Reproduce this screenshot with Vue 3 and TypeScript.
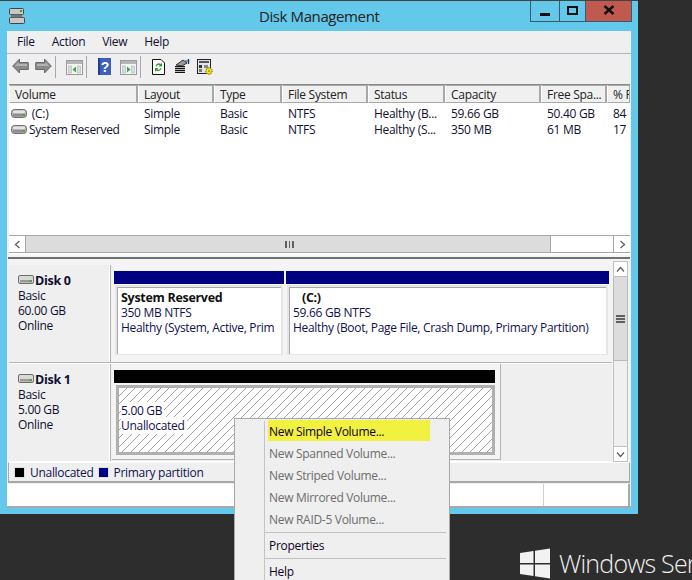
<script setup lang="ts">
interface Row { name: string; layout: string; type: string; fs: string; status: string; cap: string; free: string; pct: string }
const columns: { label: string; width: number }[] = [
  { label: 'Volume', width: 129 },
  { label: 'Layout', width: 76 },
  { label: 'Type', width: 68 },
  { label: 'File System', width: 86 },
  { label: 'Status', width: 77 },
  { label: 'Capacity', width: 96 },
  { label: 'Free Spa...', width: 66 },
  { label: '% F', width: 24 },
]
const rows: Row[] = [
  { name: ' (C:)', layout: 'Simple', type: 'Basic', fs: 'NTFS', status: 'Healthy (B...', cap: '59.66 GB', free: '50.40 GB', pct: '84' },
  { name: 'System Reserved', layout: 'Simple', type: 'Basic', fs: 'NTFS', status: 'Healthy (S...', cap: '350 MB', free: '61 MB', pct: '17' },
]
const menu: { label: string; state: string }[] = [
  { label: 'New Simple Volume...', state: 'hot' },
  { label: 'New Spanned Volume...', state: 'off' },
  { label: 'New Striped Volume...', state: 'off' },
  { label: 'New Mirrored Volume...', state: 'off' },
  { label: 'New RAID-5 Volume...', state: 'off' },
]
</script>

<template>
  <div class="desk">
    <div class="window">
      <div class="titlebar">
        <svg class="appicon" width="18" height="18" viewBox="0 0 18 18">
          <rect x="1.5" y="1.5" width="14" height="6" rx="1" fill="#c8c8c8" stroke="#444"/>
          <rect x="1.5" y="10.5" width="15" height="6" rx="1" fill="#c8c8c8" stroke="#444"/>
          <rect x="3" y="7.5" width="11" height="3" fill="#777"/>
          <rect x="12" y="3" width="2" height="2" fill="#3c9a3c"/>
        </svg>
        <span class="title">Disk Management</span>
        <div class="winbtns">
          <div class="wb min"><span></span></div>
          <div class="wb max"><span></span></div>
          <div class="wb close">
            <svg width="12" height="10" viewBox="0 0 12 10"><path d="M1.5 1 L10.5 9 M10.5 1 L1.5 9" stroke="#111" stroke-width="2.4" fill="none"/></svg>
          </div>
        </div>
      </div>
      <div class="client">
        <div class="menubar">
          <span>File</span><span>Action</span><span>View</span><span>Help</span>
        </div>
        <div class="toolbar">
          <svg class="t-back" width="17" height="16" viewBox="0 0 17 16"><path d="M.7 8 L7.5 1 V4.5 H16.3 V11.5 H7.5 V15 Z" fill="#8a8a8a" stroke="#6a6a6a"/><path d="M2.8 8 L6.5 4 V6 H15 V8 Z" fill="#b4b4b4"/></svg>
          <svg class="t-fwd" width="17" height="16" viewBox="0 0 17 16"><path d="M16.3 8 L9.5 1 V4.5 H.7 V11.5 H9.5 V15 Z" fill="#8a8a8a" stroke="#6a6a6a"/><path d="M2 6 H10.5 V4 L14.2 8 H2 Z" fill="#b4b4b4"/></svg>
          <i class="sep s1"></i>
          <svg class="t-a" width="17" height="15" viewBox="0 0 17 15"><rect x=".5" y=".5" width="16" height="14" fill="#f4f4f4" stroke="#9a9a9a"/><rect x="1" y="1" width="15" height="3" fill="#b5b5b5"/><rect x="2.5" y="6" width="3" height="7" fill="#d5dde5" stroke="#aaa" stroke-width=".5"/><rect x="11.5" y="6" width="3" height="7" fill="#d5dde5" stroke="#aaa" stroke-width=".5"/><path d="M10 6.5 V12.5 L6.5 9.5 Z" fill="#3aa83a"/></svg>
          <i class="sep s2"></i>
          <svg class="t-help" width="13" height="17" viewBox="0 0 13 17"><rect width="13" height="17" fill="#3d5fbd"/><rect x="0" y="0" width="2" height="17" fill="#253f8f"/><text x="7" y="14" font-size="14" font-weight="700" fill="#fff" text-anchor="middle" font-family="Liberation Sans, sans-serif">?</text></svg>
          <svg class="t-b" width="17" height="15" viewBox="0 0 17 15"><rect x=".5" y=".5" width="16" height="14" fill="#f4f4f4" stroke="#9a9a9a"/><rect x="1" y="1" width="15" height="3" fill="#b5b5b5"/><rect x="2.5" y="6" width="3" height="7" fill="#d5dde5" stroke="#aaa" stroke-width=".5"/><rect x="11.5" y="6" width="3" height="7" fill="#d5dde5" stroke="#aaa" stroke-width=".5"/><path d="M7 6.5 V12.5 L10.5 9.5 Z" fill="#3aa83a"/></svg>
          <i class="sep s3"></i>
          <svg class="t-r" width="13" height="16" viewBox="0 0 13 16"><path d="M.5 .5 H9 L12.5 4 V15.5 H.5 Z" fill="#fff" stroke="#111"/><path d="M3.5 7 A3.5 3.5 0 0 1 9 5 L10 3.5 V7.5 H6.5 L8 6.2 A2.2 2.2 0 0 0 4.5 7.5 Z" fill="#2ca02c"/><path d="M9.5 9 A3.5 3.5 0 0 1 4 11.5 L3 13 V9 H6.5 L5 10.3 A2.2 2.2 0 0 0 8.5 9 Z" fill="#2ca02c"/></svg>
          <svg class="t-p" width="16" height="15" viewBox="0 0 16 15"><path d="M1 7 H11 V14 H1 Z" fill="#111"/><path d="M1 8.5 H11 M1 10.5 H11 M1 12.5 H11" stroke="#fff" stroke-width=".7"/><path d="M2 6 L9 1 L13 4 L8 7 Z" fill="#9a9a9a" stroke="#111" stroke-width=".8"/><path d="M14.5 0 V5" stroke="#1c2f8f" stroke-width="1.4"/><path d="M11 2 L14 2" stroke="#444"/></svg>
          <svg class="t-s" width="17" height="17" viewBox="0 0 17 17"><rect x=".5" y=".5" width="13" height="14" fill="#e4e4e4" stroke="#222"/><rect x="2" y="2" width="10" height="2" fill="#555"/><rect x="2" y="6" width="3" height="3" fill="#333"/><rect x="7" y="6" width="4" height="3" fill="#888"/><rect x="2" y="10" width="3" height="3" fill="#777"/><circle cx="12" cy="12" r="3.2" fill="#f5e21c" stroke="#4a4208" stroke-width="1" stroke-dasharray="1.2 1"/><circle cx="12" cy="12" r="1.8" fill="#f5e21c"/><circle cx="12" cy="12" r=".8" fill="#6b5f0c"/></svg>
        </div>

        <div class="list">
          <div class="headrow">
            <div v-for="c in columns" :key="c.label" class="hcell" :style="{ width: c.width + 'px' }">{{ c.label }}</div>
          </div>
          <div class="rowsbox">
            <div v-for="r in rows" :key="r.name" class="datarow">
              <div class="dc c0">
                <svg class="hdd" width="16" height="10" viewBox="0 0 16 10"><rect x=".5" y=".5" width="15" height="8" rx="3" fill="#b4b4b4" stroke="#6e6e6e"/><rect x="2" y="1.5" width="12" height="2.5" rx="1" fill="#e4e4e4"/><rect x="2" y="5" width="12" height="2.5" fill="#8e8e8e"/><rect x="11.5" y="5" width="2.5" height="2" fill="#4da64d"/></svg>
                <span>{{ r.name }}</span>
              </div>
              <div class="dc c1">{{ r.layout }}</div>
              <div class="dc c2">{{ r.type }}</div>
              <div class="dc c3">{{ r.fs }}</div>
              <div class="dc c4">{{ r.status }}</div>
              <div class="dc c5">{{ r.cap }}</div>
              <div class="dc c6">{{ r.free }}</div>
              <div class="dc c7">{{ r.pct }}</div>
            </div>
          </div>
          <div class="hscroll">
            <div class="sbtn">
              <svg width="9" height="9" viewBox="0 0 9 9"><path d="M6.5 1 L2.5 4.5 L6.5 8" stroke="#606060" stroke-width="1.3" fill="none"/></svg>
            </div>
            <div class="hthumb"><div class="grip"><i></i><i></i><i></i></div></div>
            <div class="htrack"></div>
            <div class="sbtn right">
              <svg width="9" height="9" viewBox="0 0 9 9"><path d="M2.5 1 L6.5 4.5 L2.5 8" stroke="#606060" stroke-width="1.3" fill="none"/></svg>
            </div>
          </div>
        </div>

        <div class="splitter"></div>

        <div class="disks">
          <div class="diskcol">
            <div class="diskrow r0">
              <div class="dlabel">
                <div class="dname">
                  <svg width="17" height="10" viewBox="0 0 17 10"><rect x=".5" y=".5" width="15" height="8" rx="1.5" fill="#d8d8d8" stroke="#6e6e6e"/><rect x="2" y="5" width="12" height="2.5" fill="#9a9a9a"/><rect x="11.5" y="5" width="2.5" height="2" fill="#4da64d"/></svg>
                  <b>Disk 0</b>
                </div>
                <div>Basic</div>
                <div>60.00 GB</div>
                <div>Online</div>
              </div>
              <div class="parts">
                <div class="part pa">
                  <div class="cap blue"></div>
                  <div class="body">
                    <div class="inner">
                      <b>System Reserved</b>
                      <div>350 MB NTFS</div>
                      <div>Healthy (System, Active, Prim</div>
                    </div>
                  </div>
                </div>
                <div class="part pb">
                  <div class="cap blue"></div>
                  <div class="body">
                    <div class="inner">
                      <b class="cname">(C:)</b>
                      <div>59.66 GB NTFS</div>
                      <div>Healthy (Boot, Page File, Crash Dump, Primary Partition)</div>
                    </div>
                  </div>
                </div>
              </div>
            </div>
            <div class="diskrow r1">
              <div class="dlabel">
                <div class="dname">
                  <svg width="17" height="10" viewBox="0 0 17 10"><rect x=".5" y=".5" width="15" height="8" rx="1.5" fill="#d8d8d8" stroke="#6e6e6e"/><rect x="2" y="5" width="12" height="2.5" fill="#9a9a9a"/><rect x="11.5" y="5" width="2.5" height="2" fill="#4da64d"/></svg>
                  <b>Disk 1</b>
                </div>
                <div>Basic</div>
                <div>5.00 GB</div>
                <div>Online</div>
              </div>
              <div class="parts p1">
                <div class="part pc">
                  <div class="cap black"></div>
                  <div class="hatch">
                    <div class="htext">
                      <div><span>5.00 GB</span></div>
                      <div><span>Unallocated</span></div>
                    </div>
                  </div>
                </div>
              </div>
            </div>
          </div>
          <div class="vscroll">
            <div class="vbtn">
              <svg width="9" height="9" viewBox="0 0 9 9"><path d="M1 6.5 L4.5 2.5 L8 6.5" stroke="#606060" stroke-width="1.3" fill="none"/></svg>
            </div>
            <div class="vthumb"><div class="vgrip"><i></i><i></i><i></i></div></div>
            <div class="vtrack"></div>
            <div class="vbtn">
              <svg width="9" height="9" viewBox="0 0 9 9"><path d="M1 2.5 L4.5 6.5 L8 2.5" stroke="#606060" stroke-width="1.3" fill="none"/></svg>
            </div>
          </div>
        </div>

        <div class="legend">
          <i class="sw black"></i><span>Unallocated</span>
          <i class="sw blue"></i><span>Primary partition</span>
        </div>
        <div class="status">
          <div class="st1"></div>
          <div class="st2"></div>
        </div>
      </div>
    </div>

    <div class="brand">
      <svg width="31" height="31" viewBox="0 0 31 31"><path d="M0 5 L13.5 3 V15 H0 Z M15 2.8 L30 0.5 V15 H15 Z M0 16.5 H13.5 V28 L0 26 Z M15 16.5 H30 V30.5 L15 28.3 Z" fill="#f2f2f2"/></svg>
      <span>Windows Server</span>
    </div>

    <div class="ctx">
      <div class="gutter"></div>
      <div class="items">
        <div v-for="m in menu" :key="m.label" class="mi" :class="m.state">{{ m.label }}</div>
        <div class="msep first"></div>
        <div class="mi small">Properties</div>
        <div class="msep"></div>
        <div class="mi small">Help</div>
      </div>
    </div>
  </div>
</template>

<style>
html, body { margin: 0; height: 100%; overflow: hidden; background: #2d2d2d; }
</style>

<style scoped>
.desk {
  position: relative;
  width: 692px;
  height: 580px;
  overflow: hidden;
  background: #2d2d2d;
  font-family: "Open Sans", "Noto Sans", sans-serif;
  font-size: 12px;
  letter-spacing: -0.3px;
  color: #101030;
}
.window {
  width: 638px;
  height: 514px;
  background: #63c8ea;
  border-top: 1px solid #444;
  box-sizing: border-box;
  display: flex;
  flex-direction: column;
}
.titlebar {
  height: 30px;
  display: flex;
  align-items: flex-start;
  position: relative;
}
.appicon { margin: 6px 0 0 8px; }
.title {
  position: absolute;
  left: 259px;
  top: 5px;
  font-size: 15px;
  letter-spacing: -0.4px;
  line-height: 20px;
  color: #222;
}
.winbtns {
  display: flex;
  margin-left: auto;
  margin-right: 6px;
  height: 21px;
  border: 1px solid #3a5a6a;
  border-top: 0;
  box-sizing: border-box;
}
.wb { display: flex; align-items: center; justify-content: center; height: 20px; }
.min { width: 28px; border-right: 1px solid #3a5a6a; }
.min span { display: block; width: 10px; height: 3px; background: #111; margin-top: 6px; }
.max { width: 25px; border-right: 1px solid #3a5a6a; }
.max span { display: block; width: 7px; height: 5px; border: 2px solid #111; margin-top: -2px; }
.close { width: 45px; background: #c05a50; }
.close svg { margin-top: -2px; }
.client {
  margin-left: 7px;
  width: 624px;
  height: 477px;
  background: #efefef;
  display: flex;
  flex-direction: column;
  box-sizing: border-box;
  border-bottom: 2px solid #a9a9a9;
}
.menubar {
  height: 20px;
  flex: none;
  display: flex;
  align-items: center;
  padding: 0 0 2px 10px;
  gap: 17px;
  border-bottom: 1px solid #b4b4c4;
}
.toolbar {
  height: 30px;
  flex: none;
  position: relative;
}
.toolbar svg, .toolbar .sep { position: absolute; }
.sep { width: 1px; height: 22px; top: 2px; background: #a8a8a8; }
.t-back { left: 5px; top: 4px; }
.t-fwd { left: 28px; top: 4px; }
.s1 { left: 48px; }
.t-a { left: 59px; top: 6px; }
.s2 { left: 79px; }
.t-help { left: 91px; top: 4px; }
.t-b { left: 113px; top: 6px; }
.s3 { left: 133px; }
.t-r { left: 145px; top: 5px; }
.t-p { left: 167px; top: 5px; }
.t-s { left: 190px; top: 5px; }

.list {
  margin-left: 2px;
  width: 621px;
  height: 171px;
  flex: none;
  background: #fff;
  border-top: 1px solid #8a8a8a;
  box-sizing: border-box;
  display: flex;
  flex-direction: column;
  overflow: hidden;
}
.headrow { display: flex; height: 19px; flex: none; background: #f0f0f0; border-bottom: 1px solid #fff; box-sizing: border-box; }
.hcell {
  box-sizing: border-box;
  flex: none;
  padding-left: 5px;
  line-height: 17px;
  border: 1px solid #a8a8a8;
  border-left-color: #fff;
  border-right: 2px solid #a8a8a8;
  overflow: hidden;
  white-space: nowrap;
  color: #222;
}
.rowsbox { padding-top: 2px; }
.datarow { display: flex; height: 16px; line-height: 16px; white-space: pre; }
.dc { flex: none; padding-left: 6px; box-sizing: border-box; overflow: hidden; }
.c0 { width: 129px; padding-left: 2px; display: flex; align-items: center; gap: 2px; }
.c1 { width: 76px; }
.c2 { width: 68px; }
.c3 { width: 86px; }
.c4 { width: 77px; }
.c5 { width: 96px; }
.c6 { width: 66px; }
.c7 { width: 23px; }
.hscroll {
  margin-top: auto;
  margin-bottom: 2px;
  height: 18px;
  flex: none;
  display: flex;
  background: #fff;
  border-top: 1px solid #a8a8a8;
  border-bottom: 1px solid #a8a8a8;
  box-sizing: border-box;
}
.sbtn { width: 17px; flex: none; display: flex; align-items: center; justify-content: center; border-right: 1px solid #a8a8a8; box-sizing: border-box; }
.sbtn.right { border-right: 0; border-left: 1px solid #a8a8a8; width: 17px; }
.hthumb { width: 525px; flex: none; background: #dcdcdc; border-right: 1px solid #a8a8a8; box-sizing: border-box; display: flex; align-items: center; justify-content: center; }
.grip { display: flex; gap: 2px; margin-left: 3px; }
.grip i { display: block; width: 1.5px; height: 7px; background: #606060; }
.htrack { flex: 1; }

.splitter {
  height: 4px;
  flex: none;
  margin-left: 1px;
  width: 622px;
  box-sizing: border-box;
  border-bottom: 2px solid #707070;
  background: #f4f4f4;
}
.disks { display: flex; height: 203px; flex: none; margin-left: 2px; width: 621px; background: #f4f4f4; }
.diskcol { width: 603px; flex: none; display: flex; flex-direction: column; padding-top: 6px; box-sizing: border-box; }
.diskrow { display: flex; flex: none; background: #efefef; }
.r0 { height: 98px; border-bottom: 1px solid #b4b4b4; box-sizing: border-box; }
.r1 { height: 99px; border-top: 1px solid #fff; box-sizing: border-box; border-bottom: 1px solid #fff; }
.dlabel {
  width: 101px;
  flex: none;
  padding: 8px 0 0 9px;
  box-sizing: border-box;
  line-height: 15px;
  border-right: 1px solid #fff;
  margin-right: 2px;
  box-shadow: 1px 0 0 #b4b4b4;
}
.dname { display: flex; align-items: center; height: 15px; font-size: 12.5px; }
.dname svg { margin-top: -2px; margin-right: 0; }
.parts { display: flex; gap: 2px; padding: 6px 0 0 2px; flex: none; box-sizing: content-box; }
.r0 .parts { width: 495px; padding-right: 3px; height: 91px; background: #f4f4f4; }
.p1 { width: 389px; background: #f4f4f4; padding-right: 5px; border-right: 1px solid #b4b4b4; height: 96px; box-sizing: border-box; border-bottom: 1px solid #b4b4b4; }
.part { display: flex; flex-direction: column; }
.pa { width: 170px; }
.pb { width: 323px; }
.pc { width: 381px; }
.cap { height: 13px; flex: none; }
.blue { background: #000080; }
.black { background: #000; }
.body { height: 72px; padding: 3px 3px 2px; background: #e6e6e6; box-sizing: border-box; box-shadow: inset 0 0 0 1px #f4f4f4; }
.inner {
  height: 67px;
  background: #fff;
  border-left: 1px solid #a8a8a8;
  border-top: 1px solid #a8a8a8;
  padding: 2px 0 0 3px;
  box-sizing: border-box;
  line-height: 15px;
  white-space: nowrap;
  overflow: hidden;
  color: #101050;
}
.inner b { color: #111; display: block; font-size: 12.5px; }
.cname { padding-left: 9px; }
.hatch {
  height: 70px;
  border: 3px solid #b0b0b0;
  box-sizing: border-box;
  margin-left: 2px;
  margin-top: 2px;
  background-color: #fff;
  background-image: repeating-linear-gradient(135deg, transparent 0 5.3px, #a4a4a4 5.3px 6px);
  position: relative;
}
.htext { position: absolute; left: 2px; top: 15px; line-height: 15px; color: #101050; }
.htext span { background: #fff; padding-right: 2px; }
.vscroll { width: 15px; flex: none; display: flex; flex-direction: column; margin: 2px 0 0 1px; }
.vbtn { height: 16px; flex: none; display: flex; align-items: center; justify-content: center; background: #fff; border: 1px solid #c0c0c0; box-sizing: border-box; }
.vthumb { height: 84px; flex: none; background: #dcdcdc; border: 1px solid #b8b8b8; border-top: 0; box-sizing: border-box; display: flex; align-items: center; justify-content: center; }
.vgrip { display: flex; flex-direction: column; gap: 1px; }
.vgrip i { display: block; width: 9px; height: 2px; background: #606060; }
.vtrack { flex: 1; background: #f0f0f0; border-left: 1px solid #c0c0c0; border-right: 1px solid #c0c0c0; }

.legend {
  height: 21px;
  flex: none;
  margin-left: 1px;
  width: 622px;
  box-sizing: border-box;
  border-top: 1px solid #fff;
  border-bottom: 2px solid #a8a8a8;
  border-left: 1px solid #a8a8a8;
  border-right: 1px solid #a8a8a8;
  display: flex;
  align-items: center;
  padding-left: 5px;
  color: #101050;
}
.sw { width: 11px; height: 11px; margin-right: 5px; border: 1px solid #ddd; box-sizing: border-box; flex: none; }
.legend span { margin-right: 4px; }
.status {
  flex: 1;
  display: flex;
  background: #fff;
  margin-top: 1px;
  margin-right: 1px;
  border-right: 2px solid #a8a8a8;
}
.st1 { width: 536px; flex: none; border-right: 1px solid #d0d0d0; }
.st2 { flex: 1; }

.brand {
  position: absolute;
  left: 520px;
  top: 546px;
  display: flex;
  align-items: center;
  gap: 8px;
  color: #f0f0f0;
  font-family: "Open Sans", sans-serif;
  font-weight: 300;
  font-size: 25px;
  letter-spacing: -0.8px;
  white-space: nowrap;
}
.ctx {
  position: absolute;
  left: 234px;
  top: 418px;
  width: 216px;
  height: 170px;
  background: #efefef;
  border: 1px solid #a8a8a8;
  box-sizing: border-box;
  display: flex;
}
.gutter { width: 29px; flex: none; border-right: 1px solid #c4c4c4; margin-top: 2px; }
.items { flex: 1; padding: 2px 0 0 3px; }
.mi { height: 22px; line-height: 22px; padding-left: 1px; width: 161px; color: #100020; white-space: nowrap; }
.mi.hot { background: #f1f13f; height: 21px; line-height: 23px; margin-top: -1px; margin-bottom: 2px; }
.mi.off { color: #6d6d6d; }
.mi.small { height: 24px; line-height: 24px; }
.msep { height: 1px; background: #c0c0c0; margin: 0 0 1px -3px; width: 181px; }
.msep.first { margin-top: 1px; }
</style>
